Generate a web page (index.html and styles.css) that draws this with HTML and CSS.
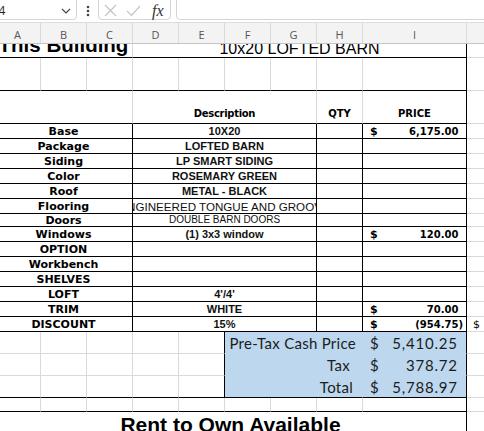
FILE: index.html
```html
<!DOCTYPE html>
<html lang="en">
<head>
<meta charset="utf-8">
<title>Sheet</title>
<link rel="stylesheet" href="styles.css">
</head>
<body>
<div class="app">
  <div class="fbar">
    <div class="namebox">
      <span class="ref">A4</span>
      <svg class="chev" width="10" height="6" viewBox="0 0 10 6"><polyline points="1,1 5,5 9,1" fill="none" stroke="#444" stroke-width="1.2"/></svg>
    </div>
    <svg class="dots" width="4" height="12" viewBox="0 0 4 12"><circle cx="2" cy="2" r="1.3" fill="#444"/><circle cx="2" cy="6" r="1.3" fill="#444"/><circle cx="2" cy="10" r="1.3" fill="#444"/></svg>
    <div class="fxbox">
      <svg class="ix" width="13" height="13" viewBox="0 0 13 13"><path d="M1 1 L12 12 M12 1 L1 12" stroke="#c4c4c4" stroke-width="1.2" fill="none"/></svg>
      <svg class="ic" width="15" height="12" viewBox="0 0 15 12"><path d="M1 6 L5.5 10.5 L14 1" stroke="#c4c4c4" stroke-width="1.2" fill="none"/></svg>
      <span class="fx">fx</span>
    </div>
    <div class="formula"></div>
  </div>

  <div class="colhdr">
    <div class="ch">A</div><div class="ch">B</div><div class="ch">C</div><div class="ch">D</div><div class="ch">E</div><div class="ch">F</div><div class="ch">G</div><div class="ch">H</div><div class="ch">I</div><div class="ch">J</div>
  </div>

  <div class="sheet">
    <div class="row h14">
      <div class="c s3 kb ttl"><span>This Building</span></div>
      <div class="c s6 kr kb sub"><span>10x20 LOFTED BARN</span></div>
      <div class="c"></div>
    </div>
    <div class="row h33">
      <div class="c kb"></div><div class="c kb"></div><div class="c kb"></div><div class="c kb"></div><div class="c kb"></div><div class="c kb"></div><div class="c kb"></div><div class="c kb"></div><div class="c kr kb"></div><div class="c"></div>
    </div>
    <div class="row h33">
      <div class="c s3 kb"></div>
      <div class="c s4 kb hd"><span class="hdw">Description</span></div>
      <div class="c kb hd"><span>QTY</span></div>
      <div class="c kr kb hd"><span>PRICE</span></div>
      <div class="c"></div>
    </div>

    <div class="row h15">
      <div class="c s3 kr kb lb">Base</div>
      <div class="c s4 kr kb ds">10X20</div>
      <div class="c kr kb"></div>
      <div class="c kr kb pr"><span class="cur">$</span><span class="amt">6,175.00<span class="pad">)</span></span></div>
      <div class="c"></div>
    </div>
    <div class="row h15">
      <div class="c s3 kr kb lb">Package</div>
      <div class="c s4 kr kb ds">LOFTED BARN</div>
      <div class="c kr kb"></div><div class="c kr kb"></div><div class="c"></div>
    </div>
    <div class="row h15">
      <div class="c s3 kr kb lb">Siding</div>
      <div class="c s4 kr kb ds">LP SMART SIDING</div>
      <div class="c kr kb"></div><div class="c kr kb"></div><div class="c"></div>
    </div>
    <div class="row h15">
      <div class="c s3 kr kb lb">Color</div>
      <div class="c s4 kr kb ds">ROSEMARY GREEN</div>
      <div class="c kr kb"></div><div class="c kr kb"></div><div class="c"></div>
    </div>
    <div class="row h15">
      <div class="c s3 kr kb lb">Roof</div>
      <div class="c s4 kr kb ds">METAL - BLACK</div>
      <div class="c kr kb"></div><div class="c kr kb"></div><div class="c"></div>
    </div>
    <div class="row h15">
      <div class="c s3 kr kb lb">Flooring</div>
      <div class="c s4 kr kb ds thin"><span>ENGINEERED TONGUE AND GROOVE</span></div>
      <div class="c kr kb"></div><div class="c kr kb"></div><div class="c"></div>
    </div>
    <div class="row h13">
      <div class="c s3 kr kb lb">Doors</div>
      <div class="c s4 kr kb ds sm">DOUBLE BARN DOORS</div>
      <div class="c kr kb"></div><div class="c kr kb"></div><div class="c"></div>
    </div>
    <div class="row h15">
      <div class="c s3 kr kb lb">Windows</div>
      <div class="c s4 kr kb ds">(1) 3x3 window</div>
      <div class="c kr kb"></div>
      <div class="c kr kb pr"><span class="cur">$</span><span class="amt">120.00<span class="pad">)</span></span></div>
      <div class="c"></div>
    </div>
    <div class="row h15">
      <div class="c s3 kr kb lb">OPTION</div>
      <div class="c s4 kr kb ds"></div>
      <div class="c kr kb"></div><div class="c kr kb"></div><div class="c"></div>
    </div>
    <div class="row h15">
      <div class="c s3 kr kb lb">Workbench</div>
      <div class="c s4 kr kb ds"></div>
      <div class="c kr kb"></div><div class="c kr kb"></div><div class="c"></div>
    </div>
    <div class="row h15">
      <div class="c s3 kr kb lb">SHELVES</div>
      <div class="c s4 kr kb ds"></div>
      <div class="c kr kb"></div><div class="c kr kb"></div><div class="c"></div>
    </div>
    <div class="row h15">
      <div class="c s3 kr kb lb">LOFT</div>
      <div class="c s4 kr kb ds">4'/4'</div>
      <div class="c kr kb"></div><div class="c kr kb"></div><div class="c"></div>
    </div>
    <div class="row h15">
      <div class="c s3 kr kb lb">TRIM</div>
      <div class="c s4 kr kb ds">WHITE</div>
      <div class="c kr kb"></div>
      <div class="c kr kb pr"><span class="cur">$</span><span class="amt">70.00<span class="pad">)</span></span></div>
      <div class="c"></div>
    </div>
    <div class="row h15">
      <div class="c s3 kr kb lb">DISCOUNT</div>
      <div class="c s4 kr kb ds">15%</div>
      <div class="c kr kb"></div>
      <div class="c kr kb pr"><span class="cur">$</span><span class="amt">(954.75)</span></div>
      <div class="c jd">$</div>
    </div>

    <div class="row h22">
      <div class="c"></div><div class="c"></div><div class="c"></div><div class="c"></div><div class="c kr"></div>
      <div class="c s3 blue bl l1">Pre-Tax Cash Price</div>
      <div class="c blue kr bp"><span>$</span><span class="num">5,410.25</span></div>
      <div class="c"></div>
    </div>
    <div class="row h22">
      <div class="c"></div><div class="c"></div><div class="c"></div><div class="c"></div><div class="c kr"></div>
      <div class="c s3 blue bl l2">Tax</div>
      <div class="c blue kr bp"><span>$</span><span class="num">378.72</span></div>
      <div class="c"></div>
    </div>
    <div class="row h22">
      <div class="c kb"></div><div class="c kb"></div><div class="c kb"></div><div class="c kb"></div><div class="c kr kb"></div>
      <div class="c s3 blue kb bl l3">Total</div>
      <div class="c blue kr kb bp"><span>$</span><span class="num">5,788.97</span></div>
      <div class="c"></div>
    </div>
    <div class="row h14">
      <div class="c kb"></div><div class="c kb"></div><div class="c kb"></div><div class="c kb"></div><div class="c kb"></div><div class="c kb"></div><div class="c kb"></div><div class="c kb"></div><div class="c kr kb"></div><div class="c"></div>
    </div>
    <div class="row h30">
      <div class="c s9 kr nb rent">Rent to Own Available</div>
      <div class="c"></div>
    </div>
  </div>
</div>
</body>
</html>
```

FILE: styles.css
```css
* { box-sizing: border-box; }

html, body {
  margin: 0;
  padding: 0;
}

body {
  width: 484px;
  height: 431px;
  overflow: hidden;
  background: #ffffff;
  font-family: "Liberation Sans", Arial, sans-serif;
  color: #000;
}

.app {
  width: 484px;
}

/* ---------- formula bar ---------- */
.fbar {
  height: 22px;
  display: flex;
  align-items: flex-start;
}

.namebox {
  flex: none;
  width: 117px;
  height: 26px;
  margin-top: -6px;
  margin-left: -40px;
  border: 1px solid #d4d4d4;
  border-radius: 4px;
  display: flex;
  align-items: center;
  padding: 7px 5px 0 30px;
}

.ref {
  font: 12px "Open Sans", sans-serif;
  color: #222;
}

.chev {
  margin-left: auto;
}

.dots {
  flex: none;
  margin: 5px 0 0 9px;
}

.fxbox {
  flex: none;
  width: 73px;
  height: 26px;
  margin-top: -6px;
  margin-left: 8px;
  border: 1px solid #d4d4d4;
  border-radius: 4px;
  display: flex;
  align-items: center;
  padding: 7px 0 0 5px;
}

.ic { margin-left: 9px; }

.fx {
  margin-left: 11px;
  font: italic 16px "Liberation Serif", serif;
  color: #333;
  line-height: 16px;
}

.formula {
  flex: 1;
  height: 26px;
  margin-top: -6px;
  margin-left: 5px;
  margin-right: -20px;
  border: 1px solid #d4d4d4;
  border-radius: 4px;
}

/* ---------- column header ---------- */
.colhdr {
  display: grid;
  grid-template-columns: repeat(8, 46px) 104px 40px;
  margin-left: -5px;
  height: 22px;
  background: #f3f3f3;
  border-top: 1px solid #dcdcdc;
  border-bottom: 1px solid #c4c4c4;
}

.ch {
  border-right: 1px solid #dadada;
  display: flex;
  justify-content: center;
  align-items: center;
  padding-top: 3px;
  font: 11px "Open Sans", sans-serif;
  color: #555;
}

/* ---------- sheet ---------- */
.sheet {
  margin-left: -5px;
}

.row {
  display: grid;
  grid-template-columns: repeat(8, 46px) 104px 40px;
}

.h13 { height: 13px; }
.h14 { height: 14px; }
.h15 { height: 15px; }
.h22 { height: 22px; }
.h30 { height: 30px; }
.h33 { height: 33px; }

.c {
  min-width: 0;
  border-right: 1px solid #dadada;
  border-bottom: 1px solid #dadada;
  display: flex;
  align-items: center;
  justify-content: center;
  overflow: hidden;
  white-space: nowrap;
}

.s3 { grid-column: span 3; }
.s4 { grid-column: span 4; }
.s6 { grid-column: span 6; }
.s9 { grid-column: span 9; }

.blue {
  background: #bdd7ee;
  border-right-color: #bdd7ee;
  border-bottom-color: #bdd7ee;
}

.kr { border-right-color: #000; }
.kb { border-bottom-color: #000; }
.nb { border-bottom-color: transparent; }

/* title row */
.ttl {
  align-items: flex-start;
  font: bold 20.5px "Liberation Sans", Arial, sans-serif;
}
.ttl span {
  display: block;
  line-height: 20px;
  margin-top: -9px;
}

.sub {
  align-items: flex-start;
  font: 16px "Liberation Sans", Arial, sans-serif;
}
.sub span {
  display: block;
  line-height: 16px;
  margin-top: -3px;
}

/* table header */
.hd {
  align-items: flex-end;
  padding-bottom: 3px;
  font: bold 10px "DejaVu Sans", sans-serif;
  line-height: 12px;
}
.hdw { letter-spacing: -0.3px; }

/* labels and descriptions */
.lb {
  font: bold 11px "DejaVu Sans", sans-serif;
  line-height: 13px;
}

.ds {
  font: bold 11px "Liberation Sans", Arial, sans-serif;
  line-height: 13px;
  color: #111;
}
.ds.thin {
  font-weight: normal;
  font-size: 11.6px;
}
.ds.sm {
  font-weight: normal;
  font-size: 10px;
  line-height: 12px;
}

/* prices */
.pr {
  justify-content: space-between;
  padding: 0 3px 0 7px;
  line-height: 13px;
}
.cur { font: bold 11px "DejaVu Sans", sans-serif; }
.amt { font: bold 10px "DejaVu Sans", sans-serif; }
.pad { visibility: hidden; }

.jd {
  justify-content: flex-start;
  padding-left: 6px;
  font: 11px "DejaVu Sans", sans-serif;
}

/* totals box */
.bl {
  justify-content: flex-end;
  font: 15px Lato, sans-serif;
  letter-spacing: 0.28px;
  line-height: 18px;
  color: #1c1c1c;
}
.l1 { padding-right: 6px; }
.l2 { padding-right: 12px; }
.l3 { padding-right: 9px; }

.bp {
  justify-content: space-between;
  padding: 0 9px 0 7px;
  font: 15px Lato, sans-serif;
  line-height: 18px;
  color: #1c1c1c;
}
.num {
  letter-spacing: 0.8px;
  margin-right: -0.8px;
}

/* bottom heading */
.rent {
  align-items: flex-start;
  padding-top: 1px;
  font: bold 21px "Liberation Sans", Arial, sans-serif;
  line-height: 24px;
}
```
